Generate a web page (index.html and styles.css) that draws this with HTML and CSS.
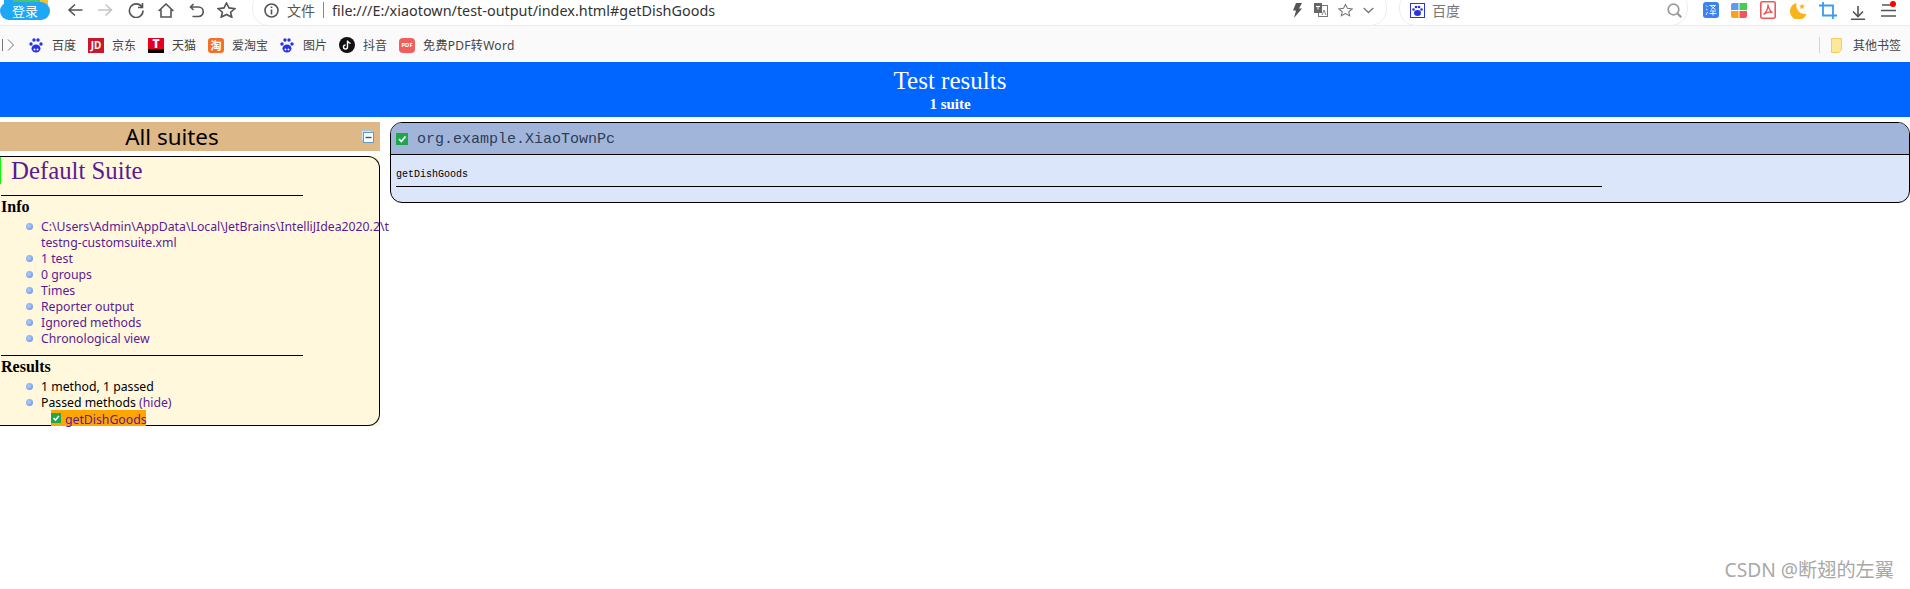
FILE: index.html
```html
<!DOCTYPE html>
<html lang="zh">
<head>
<meta charset="utf-8">
<title>TestNG reports</title>
<link rel="stylesheet" href="styles.css">
</head>
<body>
<header class="chrome">
  <div class="toolbar">
    <span class="login">登录</span>
    <svg class="tb back" width="16" height="14" viewBox="0 0 16 14"><path d="M15.500 7H2M8 1.500 2 7l6 5.500" class="st"/></svg>
    <svg class="tb fwd" width="15" height="14" viewBox="0 0 15 14"><path d="M0 7h13M7.500 1.500 13.500 7l-6 5.500" class="st lt"/></svg>
    <svg class="tb rel" width="16" height="16" viewBox="0 0 16 16"><path d="M13.800 4.800A6.800 6.800 0 1 0 15 8.500M14.500 1v4.500H10" class="st"/></svg>
    <svg class="tb home" width="16" height="15" viewBox="0 0 16 15"><path d="M.6 8 8 1l7.400 7M3 6.500V14h10V6.500" class="st"/></svg>
    <svg class="tb undo" width="15" height="15" viewBox="0 0 15 15"><path d="M4.500 1 1.500 4l3 3M2 4h7.500a4.500 4.500 0 0 1 0 9.500H3.500" class="st"/></svg>
    <svg class="tb fav" width="19" height="16" viewBox="0 0 19 16"><path d="m9.500 1 2.500 4.900 6 .7-4.400 3.600 1.200 5-5.300-2.700-5.300 2.700 1.200-5L1 6.600l6-.7z" class="st"/></svg>
    <div class="address">
      <svg class="info" width="15" height="15" viewBox="0 0 15 15"><circle cx="7.500" cy="7.500" r="6.500" class="st"/><path d="M7.500 6.500V11.500M7.500 3.500V5" class="st"/></svg>
      <span class="scheme">文件</span>
      <span class="vsep"></span>
      <span class="url">file:///E:/xiaotown/test-output/index.html#getDishGoods</span>
      <span class="grow"></span>
      <svg class="bolt" width="10" height="15" viewBox="0 0 10 15"><path d="M4 0h6L7 5.500h3L2 15l2-7.500H1z" fill="#555"/></svg>
      <svg class="trans" width="14" height="14" viewBox="0 0 14 14"><rect x="4.500" y="2.500" width="9" height="11" fill="#fff" stroke="#777"/><rect width="8" height="10" fill="#666"/><path d="M2 3.500h4M4 3.500v3" stroke="#fff"/><path d="M8 12l2-5 2 5" fill="none" stroke="#888"/></svg>
      <svg class="astar" width="15" height="14" viewBox="0 0 19 16"><path d="m9.500 1 2.500 4.900 6 .7-4.400 3.600 1.200 5-5.300-2.700-5.300 2.700 1.200-5L1 6.600l6-.7z" class="st gr"/></svg>
      <svg class="chev" width="11" height="7" viewBox="0 0 11 7"><path d="m.7 1 4.800 4.500L10.300 1" class="st gr"/></svg>
    </div>
    <div class="search">
      <svg width="15" height="15" viewBox="0 0 15 15"><rect x=".5" y=".5" width="14" height="14" fill="#fff" stroke="#2932e1"/><ellipse cx="7.500" cy="10" rx="3.500" ry="2.900" fill="#2932e1"/><circle cx="3.500" cy="6.500" r="1.300" fill="#2932e1"/><circle cx="6" cy="4" r="1.300" fill="#2932e1"/><circle cx="9" cy="4" r="1.300" fill="#2932e1"/><circle cx="11.500" cy="6.500" r="1.300" fill="#2932e1"/></svg>
      <span class="engine">百度</span>
      <span class="grow"></span>
      <svg width="15" height="15" viewBox="0 0 15 15"><circle cx="6.500" cy="6.500" r="5.300" fill="none" stroke="#999" stroke-width="1.700"/><path d="m10.500 10.500 3.800 3.800" stroke="#999" stroke-width="2.200"/></svg>
    </div>
    <div class="ext">
      <svg width="16" height="16" viewBox="0 0 16 16"><rect width="16" height="16" rx="3" fill="#3b82f0"/><path d="M3 3.500l1.500 1.500M3 7l1.500 1M3 13l1.500-3M6.500 3.500h6L8 7.500M8 4l4.500 3.500M7 9h6M6.500 11.500h7M10 9v4.500" stroke="#fff" stroke-width=".9" fill="none"/></svg>
      <svg width="16" height="15" viewBox="0 0 16 15"><path d="M0 2a2 2 0 0 1 2-2h5.500v7H0z" fill="#5b9bf5"/><path d="M8.500 0H16v7H8.500z" fill="#45cf4a"/><path d="M0 8h7.500v7H2a2 2 0 0 1-2-2z" fill="#f7a21b"/><path d="M8.500 8H16v5a2 2 0 0 1-2 2H8.500z" fill="#f25555"/></svg>
      <svg class="ex1" width="16" height="18" viewBox="0 0 16 18"><rect x=".8" y=".8" width="14.400" height="16.400" rx="1.500" fill="#fff" stroke="#ea5a5a" stroke-width="1.600"/><path d="M8 3.500C8 7.500 6 11.500 3.500 13.500 7 11 10 10.500 12.500 11.500 10 10 8.500 7.500 8 3.500z" fill="none" stroke="#ea5a5a" stroke-width="1.400"/></svg>
      <svg class="ex2" width="17" height="17" viewBox="0 0 17 17"><path d="M6.500 1a8.500 8.500 0 1 0 10 11A9 9 0 0 1 6.500 1z" fill="#fbb31d"/><path d="m12 1.500.9 1.900 2 .2-1.500 1.400.4 2-1.800-1-1.800 1 .4-2-1.500-1.400 2-.2z" fill="#fbb31d"/></svg>
      <svg width="18" height="17" viewBox="0 0 18 17"><path d="M4 0v13.500h14M0 3.500h14V17" fill="none" stroke="#3a9bf4" stroke-width="1.800"/></svg>
      <svg class="ex2 ex3" width="14" height="14" viewBox="0 0 14 14"><path d="M7 0v10M2 5.500l5 5 5-5M0 13.300h14" class="st"/></svg>
      <span class="menu"><svg width="15" height="15" viewBox="0 0 15 15"><path d="M1 2h10M0 7.500h15M0 13h15" stroke="#555" stroke-width="1.600"/></svg><i class="dot"></i></span>
    </div>
  </div>
  <nav class="bookmarks">
    <svg class="sidebar" width="12" height="12" viewBox="0 0 12 12"><path d="M.5 0v12M6 .5l5.500 5.500L6 11.500" fill="none" stroke="#777"/></svg>
    <span class="bm first"><svg class="paw" width="14" height="15" viewBox="0 0 14 15"><ellipse cx="7" cy="10.500" rx="4.500" ry="4" fill="#2932e1"/><circle cx="2" cy="6" r="1.700" fill="#2932e1"/><circle cx="5" cy="2" r="1.700" fill="#2932e1"/><circle cx="9" cy="2" r="1.700" fill="#2932e1"/><circle cx="12" cy="6" r="1.700" fill="#2932e1"/><circle cx="5.500" cy="11.500" r="1" fill="#fff"/><circle cx="8.500" cy="11.500" r="1" fill="#fff"/></svg><span>百度</span></span>
    <span class="bm"><span class="logo jd">JD</span><span>京东</span></span>
    <span class="bm"><span class="logo tm"><b class="tm-t">T</b></span><span>天猫</span></span>
    <span class="bm"><span class="logo tao">淘</span><span>爱淘宝</span></span>
    <span class="bm"><svg class="paw" width="14" height="15" viewBox="0 0 14 15"><ellipse cx="7" cy="10.500" rx="4.500" ry="4" fill="#2932e1"/><circle cx="2" cy="6" r="1.700" fill="#2932e1"/><circle cx="5" cy="2" r="1.700" fill="#2932e1"/><circle cx="9" cy="2" r="1.700" fill="#2932e1"/><circle cx="12" cy="6" r="1.700" fill="#2932e1"/><circle cx="5.500" cy="11.500" r="1" fill="#fff"/><circle cx="8.500" cy="11.500" r="1" fill="#fff"/></svg><span>图片</span></span>
    <span class="bm"><svg width="16" height="16" viewBox="0 0 16 16"><circle cx="8" cy="8" r="8" fill="#111"/><path d="M8.500 3.500v6.500a2 2 0 1 1-2-2M8.500 3.500c.3 1.700 1.500 2.600 3.100 2.900" fill="none" stroke="#fff" stroke-width="1.400"/></svg><span>抖音</span></span>
    <span class="bm"><span class="logo pdf">PDF</span><span class="bm-long">免费PDF转Word</span></span>
    <span class="grow"></span>
    <span class="vsep2"></span>
    <svg class="folder" width="11" height="15" viewBox="0 0 11 15"><path d="M.5.500h10v11l-2.500 3H.5z" fill="#fde79a" stroke="#f0cd62"/></svg>
    <span class="other">其他书签</span>
  </nav>
</header>

<div class="banner">
  <div class="banner-title">Test results</div>
  <div class="banner-sub">1 suite</div>
</div>

<div class="report">
  <aside class="navigator">
    <div class="nav-head">
      <span class="nav-title">All suites</span>
      <svg class="collapse" width="13" height="13" viewBox="0 0 13 13"><rect x=".5" y=".5" width="10" height="10" fill="#cfe3f5" stroke="#a8c8e0"/><rect x="2.500" y="2.500" width="10" height="10" fill="#fff" stroke="#5f9cc5"/><path d="M4.500 7.500h6" stroke="#1b5c8c" stroke-width="1.400"/></svg>
    </div>
    <div class="suite-back">
      <div class="suite">
        <a class="suite-name">Default Suite</a>
        <hr class="rule">
        <div class="section-title">Info</div>
        <ul class="items">
          <li><a>C:\Users\Admin\AppData\Local\JetBrains\IntelliJIdea2020.2\t<br>testng-customsuite.xml</a></li>
          <li><a>1 test</a></li>
          <li><a>0 groups</a></li>
          <li><a>Times</a></li>
          <li><a>Reporter output</a></li>
          <li><a>Ignored methods</a></li>
          <li><a>Chronological view</a></li>
        </ul>
        <hr class="rule rule-2">
        <div class="section-title">Results</div>
        <ul class="items">
          <li>1 method, 1 passed</li>
          <li>Passed methods <a>(hide)</a></li>
        </ul>
        <div class="method-row"><span class="selected"><svg width="10" height="10" viewBox="0 0 12 12"><rect width="12" height="12" fill="#1fa64a"/><path d="m3 6 2.300 2.500L9.500 3.500" fill="none" stroke="#fff" stroke-width="1.800"/></svg><a>getDishGoods</a></span></div>
      </div>
    </div>
  </aside>

  <main class="panel">
    <div class="panel-head">
      <svg width="12" height="12" viewBox="0 0 12 12"><rect width="12" height="12" fill="#1fa64a"/><path d="m3 6 2.300 2.500L9.500 3.500" fill="none" stroke="#fff" stroke-width="1.800"/></svg>
      <span class="class-name">org.example.XiaoTownPc</span>
    </div>
    <div class="panel-body">
      <div class="method-name">getDishGoods</div>
      <hr class="method-rule">
    </div>
  </main>
</div>

<div class="watermark">CSDN @断翅的左翼</div>
</body>
</html>
```

FILE: styles.css
```css
html, body {
  margin: 0;
  padding: 0;
  height: 100%;
  overflow: hidden;
  background: #fff;
}

body {
  position: relative;
  font-family: "Noto Sans", "Noto Sans CJK SC", sans-serif;
}

svg {
  display: block;
  flex: none;
}

.st {
  fill: none;
  stroke: #555;
  stroke-width: 1.6;
}

.st.lt {
  stroke: #c4c4c4;
}

.st.gr {
  stroke: #777;
  stroke-width: 1.3;
}

.grow {
  flex: 1;
}

.chrome {
  height: 62px;
  background: #fafafa;
}

.toolbar {
  height: 25px;
  display: flex;
  align-items: center;
  background: #fff;
  border-bottom: 1px solid #ededed;
  isolation: isolate;
}

.login {
  position: relative;
  width: 50px;
  height: 18px;
  margin-top: -4px;
  border-radius: 9px;
  background: #1ea7f5;
  color: #fff;
  font-size: 13px;
  line-height: 18px;
  text-align: center;
}

.login::before {
  content: "";
  position: absolute;
  z-index: -1;
  top: -3px;
  left: 4px;
  width: 44px;
  height: 6px;
  background: linear-gradient(90deg, #1ea7f5 0 20%, #4cc46a 20% 82%, #f5c02c 82%);
}

.tb {
  margin-top: -5px;
}

.back { margin-left: 17px; }
.fwd { margin-left: 15px; }
.rel { margin-left: 15px; }
.home { margin-left: 14px; }
.undo { margin-left: 15px; }
.fav { margin-left: 13px; }

.address,
.search {
  height: 36px;
  margin-top: -10px;
  align-self: flex-start;
  box-sizing: border-box;
  padding-top: 4px;
  display: flex;
  align-items: center;
  border: 1px solid #ededed;
  border-radius: 17px;
  background: #fff;
}

.address {
  width: 1135px;
  margin-left: 16px;
  padding-left: 11px;
  padding-right: 12px;
}

.scheme {
  margin-left: 8px;
  font-size: 14px;
  color: #555;
}

.vsep {
  width: 1px;
  height: 16px;
  margin: 0 8px;
  background: #888;
}

.url {
  font-size: 14.4px;
  color: #333;
  white-space: nowrap;
}

.trans { margin-left: 12px; }
.astar { margin-left: 10px; }
.chev { margin-left: 10px; }

.search {
  width: 289px;
  margin-left: 12px;
  padding-left: 10px;
  padding-right: 5px;
}

.engine {
  margin-left: 7px;
  font-size: 14px;
  color: #777;
}

.ext {
  display: flex;
  align-items: center;
  gap: 12px;
  margin-left: 15px;
  margin-top: -5px;
}

.ex1 { margin-left: 1px; }
.ex2 { margin-left: 2px; }
.ex3 { margin-top: 5px; }

.menu {
  position: relative;
  margin-left: 4px;
}

.dot {
  position: absolute;
  top: -2px;
  right: 0;
  width: 6px;
  height: 6px;
  border-radius: 50%;
  background: #f00;
}

.bookmarks {
  height: 36px;
  box-sizing: border-box;
  padding: 2px 9px 0 2px;
  display: flex;
  align-items: center;
  font-size: 12px;
  color: #444;
}

.bm {
  display: flex;
  align-items: center;
  gap: 8px;
  margin-right: 12px;
}

.bm.first {
  margin-left: 15px;
}

.bm-long {
  letter-spacing: .3px;
}

.paw {
  margin-right: 1px;
}

.logo {
  width: 16px;
  height: 15px;
  display: block;
  text-align: center;
  color: #fff;
  font-weight: 700;
  font-size: 10px;
  line-height: 15px;
}

.jd { background: #c9172b; }
.tm { background: linear-gradient(#e6001e 72%, #000 72%); }
.tm-t { display: block; font-size: 12px; line-height: 11px; }
.tao { background: #f2702a; border-radius: 3px; font-size: 11px; }
.pdf { background: #f25d5d; border-radius: 4px; font-size: 6px; }

.vsep2 {
  width: 1px;
  height: 16px;
  background: #d5d5d5;
}

.folder {
  margin: 0 11px 0 11px;
}

.banner {
  height: 55px;
  box-sizing: border-box;
  padding: 4px 10px 0 0;
  background: #0066ff;
  color: #fff;
  text-align: center;
  font-family: "Liberation Serif", serif;
}

.banner-title {
  font-size: 25px;
  line-height: 30px;
}

.banner-sub {
  font-size: 15px;
  font-weight: 700;
  line-height: 16px;
}

.report {
  display: flex;
  align-items: flex-start;
  margin-top: 5px;
}

.navigator {
  width: 380px;
  flex: none;
}

.nav-head {
  position: relative;
  height: 29px;
  box-sizing: border-box;
  padding-right: 36px;
  background: #deb887;
  text-align: center;
  font-size: 22.4px;
  line-height: 29px;
  color: #000;
}

.collapse {
  position: absolute;
  top: 8px;
  right: 6px;
}

.suite-back {
  margin-top: 5px;
  background: #fff8dc;
}

.suite {
  height: 270px;
  box-sizing: border-box;
  border: 1px solid #000;
  border-left: 0;
  border-radius: 0 12px 12px 0;
  font-size: 12.25px;
  line-height: 16px;
  color: #000;
}

.suite a {
  color: #5a1a96;
}

.suite-name {
  display: block;
  height: 27px;
  box-sizing: border-box;
  padding-left: 10px;
  border-left: 1px solid #0f0;
  font-family: "Liberation Serif", serif;
  font-size: 24.8px;
  line-height: 27px;
}

.rule {
  width: 302px;
  height: 1px;
  margin: 11px 0 0 1px;
  border: 0;
  background: #000;
}

.rule-2 {
  margin-top: 9px;
}

.section-title {
  padding-left: 1px;
  font-family: "Liberation Serif", serif;
  font-size: 16px;
  font-weight: 700;
  line-height: 22px;
}

.items {
  margin: 0;
  padding: 0 0 0 41px;
  list-style: none;
  white-space: nowrap;
}

.items li {
  position: relative;
  padding-top: 1px;
  margin-bottom: -1px;
}

.items li::before {
  content: "";
  position: absolute;
  left: -15px;
  top: 4.500px;
  width: 7px;
  height: 7px;
  border-radius: 50%;
  background: radial-gradient(circle at 40% 40%, #b5cdfc, #5a8eea);
}

.method-row {
  height: 15px;
  padding-left: 51px;
}

.selected {
  display: flex;
  width: 95px;
  align-items: center;
  gap: 4px;
  height: 16px;
  margin-top: -1px;
  background: #ffa500;
}

.selected a {
  padding-top: 3px;
}

.panel {
  flex: 1;
  margin-left: 10px;
  height: 81px;
  box-sizing: border-box;
  border: 1px solid #000;
  border-radius: 12px;
  background: #dce6fb;
  overflow: hidden;
}

.panel-head {
  height: 32px;
  box-sizing: border-box;
  padding-left: 5px;
  display: flex;
  align-items: center;
  gap: 9px;
  background: #a1b5db;
  border-bottom: 1px solid #000;
}

.class-name {
  padding-top: 2px;
  font-family: "Liberation Mono", monospace;
  font-size: 15px;
  color: #2e3d58;
}

.panel-body {
  padding: 12px 0 0 5px;
}

.method-name {
  font-family: "Liberation Mono", monospace;
  font-size: 10px;
  line-height: 16px;
  color: #000;
}

.method-rule {
  width: 1206px;
  height: 1px;
  margin: 3px 0 0;
  border: 0;
  background: #000;
}

.watermark {
  position: absolute;
  right: 16px;
  bottom: 8px;
  font-size: 19.200px;
  line-height: 22px;
  color: #a8a8a8;
}
```
